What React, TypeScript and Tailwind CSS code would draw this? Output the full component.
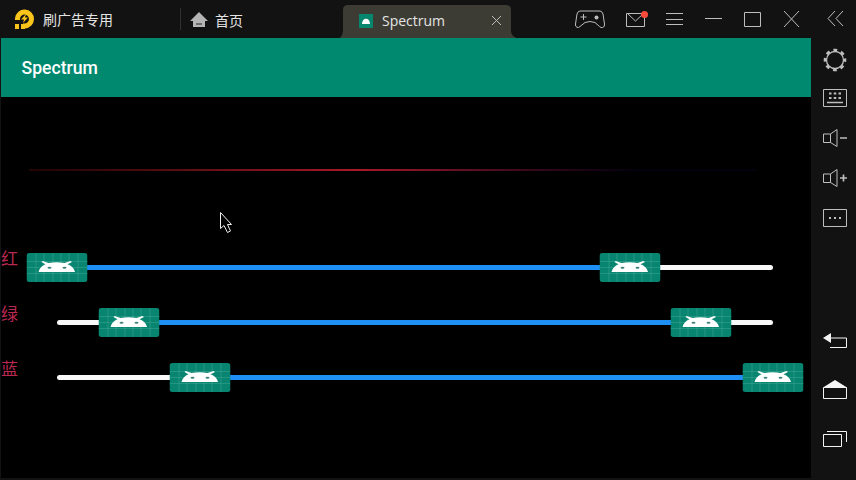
import type { ReactNode } from "react";

const rows = [
  { label: "红", from: 0, to: 80 },
  { label: "绿", from: 10, to: 90 },
  { label: "蓝", from: 20, to: 100 },
];

function Svg({ w, h, className = "", children }: { w: number; h: number; className?: string; children: ReactNode }) {
  return (
    <svg width={w} height={h} viewBox={`0 0 ${w} ${h}`} fill="none" stroke="currentColor" strokeWidth="1" className={`shrink-0 ${className}`}>
      {children}
    </svg>
  );
}

function Thumb({ at }: { at: number }) {
  return (
    <div className="absolute -top-3 h-[29px] w-[61px] -translate-x-1/2" style={{ left: `${at}%` }}>
      <Svg w={61} h={29}>
        <rect width="61" height="29" rx="3" fill="#088570" stroke="none" />
        <path
          d="M9.5 0v29M17.5 0v29M26.5 0v29M34.5 0v29M42.5 0v29M51.5 0v29M0 8.500H61M0 20.500H61M0 14.500H61"
          stroke="#48ab98"
          strokeWidth=".8"
          opacity=".55"
        />
        <path d="M12 19C13 15 15.500 12.500 19 11.200L15 9L16 8L22 10.100C27 9 33 9 38 10.100L44 8L45.500 9L41 11.200C45 12.800 47.500 15 48.500 19Z" fill="#fff" stroke="none" />
        <ellipse cx="23" cy="14.800" rx="2" ry="1" fill="#3c8278" stroke="none" />
        <ellipse cx="38" cy="14.800" rx="2" ry="1" fill="#3c8278" stroke="none" />
      </Svg>
    </div>
  );
}

function SliderRow({ label, from, to }: { label: string; from: number; to: number }) {
  return (
    <div className="flex h-[55px] items-center">
      <div className="w-[57px] pl-px pb-[20px] text-[17px] leading-[18px] text-[#ba2850]">{label}</div>
      <div className="relative h-[5px] w-[716px] rounded-full bg-[#f8f8f8]">
        <div className="absolute h-full bg-[#1e90f5]" style={{ left: `${from}%`, width: `${to - from}%` }} />
        <Thumb at={from} />
        <Thumb at={to} />
      </div>
    </div>
  );
}

function TopBar() {
  return (
    <div className="flex h-[38px] items-center text-[#bdbdbd]">
      <div className="flex w-[180px] items-center pl-[14px]">
        <Svg w={22} h={21}>
          <path d="M3.500 11V9.500A7 7 0 1 1 10.500 17H9" stroke="#f9c51b" strokeWidth="5" />
          <path d="M1 15h4v5H1zM7 15h4v5H7z" fill="#f9c51b" stroke="none" />
          <path d="M12 5L7 10.500h3L9 14L14 8.500h-3Z" fill="#f9c51b" stroke="none" />
        </Svg>
        <span className="ml-[7px] text-[14px] leading-5 text-[#e4e4e4]">刷广告专用</span>
      </div>
      <div className="h-[22px] w-px bg-[#303030]" />
      <div className="flex w-[153px] items-center pl-[9px] pt-px">
        <Svg w={18} h={16}>
          <path d="M9 0L18 9H15V15H3V9H0Z" fill="#b5b5b5" stroke="none" />
          <path d="M6 12h6" stroke="#222" />
        </Svg>
        <span className="ml-[7px] text-[14px] leading-5 text-[#e4e4e4]">首页</span>
      </div>
      <div className="relative flex h-full w-[189px] items-end">
        <Svg w={189} h={34}>
          <path d="M6 34Q9 31 9 27V6Q9 1 14 1H172Q177 1 177 6V27Q177 31 182 34Z" fill="#3d3c34" stroke="none" />
        </Svg>
        <div className="absolute inset-0 flex items-center pl-[25px] pt-[3px]">
          <Svg w={14} h={14}>
            <rect width="14" height="14" fill="#07866e" stroke="none" />
            <path d="M3 10C3 3 11 3 11 10Z" fill="#fff" stroke="none" />
          </Svg>
          <span className="ml-[9px] w-[109px] font-['Open_Sans'] text-[14px] leading-5 text-[#e4e4e4]">Spectrum</span>
          <Svg w={11} h={11}><path d="M1 1L10 10M10 1L1 10" /></Svg>
        </div>
      </div>
      <div className="flex h-full items-center pl-[51px]">
        <Svg w={32} h={20}>
          <path d="M6 2H26Q28 2 29 5L30.500 15Q31 18 28.500 18.500Q27 19 25.500 17.500L21 13.500Q16 11.500 11 13.500L6 17.500Q4.500 19 3 18.300Q1 17.500 1.500 15L3 5Q4 2 6 2Z" />
          <path d="M9.500 5v6M6.500 8h6" />
          <circle cx="22.500" cy="8.500" r="2" fill="currentColor" stroke="none" />
        </Svg>
        <Svg w={23} h={19} className="ml-[20px]">
          <path d="M.5 3.500H18.500V16.500H.5ZM2 4L9.500 11L17 4" />
          <circle cx="18.500" cy="4.500" r="3.500" fill="#fa4b3c" stroke="none" />
        </Svg>
        <Svg w={17} h={14} className="ml-[17px]"><path d="M0 1.500H17M0 7.500H17M0 12.500H17" /></Svg>
        <Svg w={17} h={14} className="ml-[22px]"><path d="M0 6.500H17" /></Svg>
        <Svg w={17} h={16} className="ml-[22px]"><path d="M.5 1.500H16.500V15.500H.5Z" /></Svg>
        <Svg w={17} h={16} className="ml-[22px]"><path d="M1 0L16 16M16 0L1 16" /></Svg>
      </div>
    </div>
  );
}

function Sidebar() {
  return (
    <aside className="flex w-[45px] shrink-0 flex-col items-center pl-[3px] text-[#bebebe]">
      <Svg w={18} h={17} className="mt-[10px]"><path d="M9 1L2 8.500L9 16M17 1L10 8.500L17 16" /></Svg>
      <Svg w={24} h={24} className="mt-[21px]">
        <circle cx="12" cy="12" r="8.500" strokeWidth="1.300" />
        <circle cx="12" cy="12" r="10" strokeWidth="2.600" strokeDasharray="3.800 4.054" strokeDashoffset="1.900" />
      </Svg>
      <Svg w={24} h={20} className="mt-[16px]">
        <path d="M.5 1.500H23.500V18.500H.5Z" />
        <path d="M6 5.500H18M6 10H18" strokeWidth="2" strokeDasharray="2.500 2.250" />
        <path d="M4 14.500H20" strokeWidth="1.500" />
      </Svg>
      <Svg w={24} h={20} className="mt-[20px]">
        <path d="M.5 6H7.500V14.500H.5ZM7.500 6L14 1.500V18.500L7.500 14.500" />
        <path d="M17 10H24" strokeWidth="1.500" />
      </Svg>
      <Svg w={24} h={20} className="mt-[20px]">
        <path d="M.5 6H7.500V14.500H.5ZM7.500 6L14 1.500V18.500L7.500 14.500" />
        <path d="M17 10H24M20.500 6.500V13.500" strokeWidth="1.700" />
      </Svg>
      <Svg w={24} h={18} className="mt-[21px]">
        <path d="M.5 .5H23.500V17.500H.5Z" />
        <path d="M6 9H18" strokeWidth="2" strokeDasharray="2 3" />
      </Svg>
      <Svg w={24} h={16} className="mt-[105px] text-[#f4f4f4]">
        <path d="M0 6L8 1V11Z" fill="currentColor" stroke="none" />
        <path d="M7 6H23.500V15.500H7" />
      </Svg>
      <Svg w={24} h={19} className="mt-[32px] text-[#f4f4f4]">
        <path d="M.5 7.500H23.500V18.500H.5Z" />
        <path d="M0 7.500L12 0L24 7.500Z" fill="currentColor" stroke="none" />
      </Svg>
      <Svg w={24} h={17} className="mt-[31px] text-[#f4f4f4]">
        <path d="M.5 4.500H18.500V16.500H.5ZM4 1.500H23.500V12" />
      </Svg>
    </aside>
  );
}

export default function App() {
  return (
    <div className="relative flex h-[480px] w-[856px] overflow-hidden bg-[#121212] font-['Noto_Sans_CJK_SC',sans-serif]">
      <div className="flex w-[811px] shrink-0 flex-col">
        <TopBar />
        <div className="ml-px flex min-h-0 flex-1 flex-col bg-black">
          <header className="flex h-[59px] items-center bg-[#00896f] pl-[20.5px] pt-px font-['Roboto'] text-[17.6px] font-medium text-white">Spectrum</header>
          <div className="mt-[72px] ml-[28px] h-[2px] w-[728px] bg-linear-to-r from-[#200404] via-[#aa1828] to-[#04000c] from-0% via-45% to-84%" />
          <main className="-ml-px mt-[69px]">
            {rows.map((row) => <SliderRow key={row.label} {...row} />)}
          </main>
        </div>
        <div className="h-[2px]" />
      </div>
      <Sidebar />
      <svg className="absolute left-[219px] top-[211px]" width="15" height="23" viewBox="0 0 15 23" fill="#000" stroke="#eee" strokeWidth="1">
        <path d="M1.500 1.500V17.500L5 14.500L8.500 21.500L11.500 20L8.500 13.500H12.500Z" />
      </svg>
    </div>
  );
}
